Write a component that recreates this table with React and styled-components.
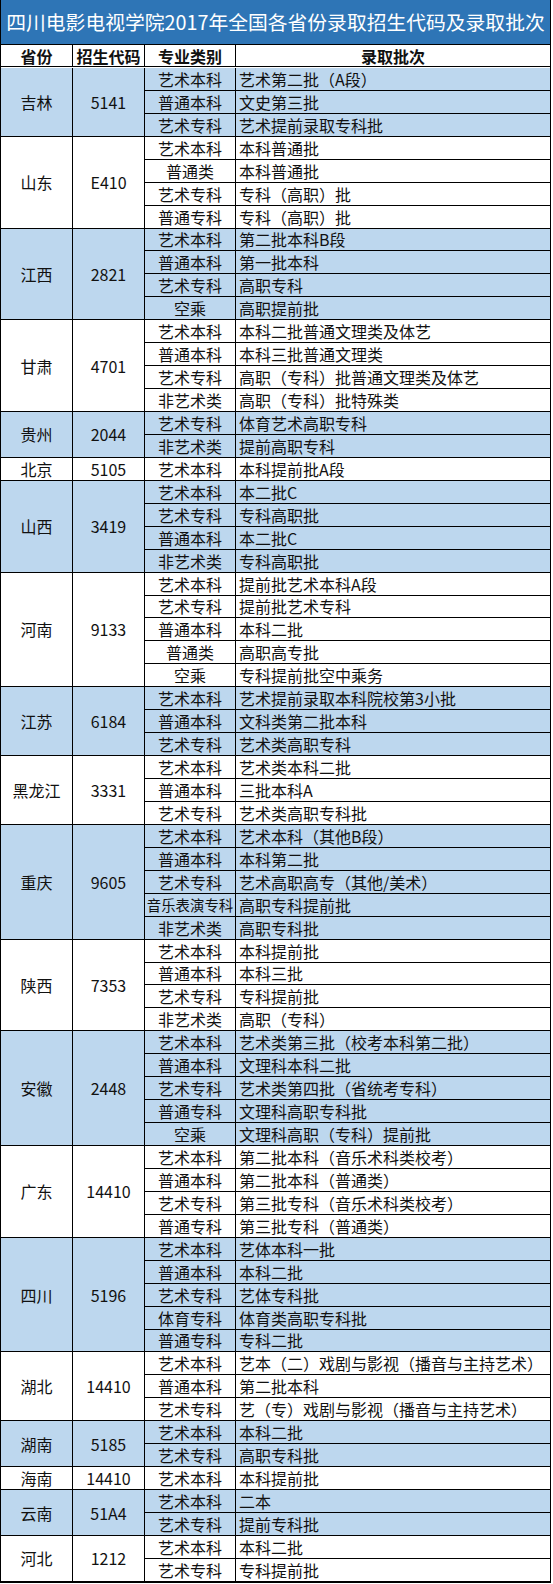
import styled, { createGlobalStyle } from "styled-components";

const GlobalStyle = createGlobalStyle`
  body {
    margin: 0;
    background: #ffffff;
    font-family: "Noto Sans CJK SC", "Noto Sans", sans-serif;
  }
`;

const Wrapper = styled.div`
  box-sizing: border-box;
  width: 551px;
  border-left: 1px solid #000;
  border-right: 1px solid #000;
  border-bottom: 1px solid #000;
  color: #111;
`;

const Title = styled.div`
  box-sizing: border-box;
  height: 45px;
  border-bottom: 1px solid #000;
  background-color: #2e75b6;
  color: #ffffff;
  font-size: 19.8px;
  line-height: 26px;
  display: flex;
  align-items: center;
  justify-content: center;
  padding-bottom: 1px;
`;

const Table = styled.div`
  display: grid;
  grid-template-columns: 72px 72px 91px 1fr;
  grid-auto-rows: 22.94px;
`;

const HeadCell = styled.div`
  box-sizing: border-box;
  height: 22px;
  display: flex;
  align-items: center;
  justify-content: center;
  font-size: 16px;
  line-height: 20px;
  font-weight: 700;
  border-bottom: 1px solid #000;
  border-right: ${(p) => (p.$last ? "none" : "1px solid #000")};
  white-space: nowrap;
`;

const Cell = styled.div`
  box-sizing: border-box;
  display: flex;
  align-items: center;
  justify-content: ${(p) => (p.$left ? "flex-start" : "center")};
  padding-left: ${(p) => (p.$left ? "3px" : "0")};
  font-size: ${(p) => (p.$tight ? "14.4px" : "16px")};
  line-height: 20px;
  white-space: nowrap;
  background-color: ${(p) => (p.$alt ? "#bdd7ee" : "#ffffff")};
  border-bottom: 1px solid #000;
  border-right: ${(p) => (p.$last ? "none" : "1px solid #000")};
  grid-row: ${(p) => (p.$span ? `span ${p.$span}` : "auto")};
`;

const data = [
  { p: "吉林", c: "5141", rows: [["艺术本科", "艺术第二批（A段）"], ["普通本科", "文史第三批"], ["艺术专科", "艺术提前录取专科批"]] },
  { p: "山东", c: "E410", rows: [["艺术本科", "本科普通批"], ["普通类", "本科普通批"], ["艺术专科", "专科（高职）批"], ["普通专科", "专科（高职）批"]] },
  { p: "江西", c: "2821", rows: [["艺术本科", "第二批本科B段"], ["普通本科", "第一批本科"], ["艺术专科", "高职专科"], ["空乘", "高职提前批"]] },
  { p: "甘肃", c: "4701", rows: [["艺术本科", "本科二批普通文理类及体艺"], ["普通本科", "本科三批普通文理类"], ["艺术专科", "高职（专科）批普通文理类及体艺"], ["非艺术类", "高职（专科）批特殊类"]] },
  { p: "贵州", c: "2044", rows: [["艺术专科", "体育艺术高职专科"], ["非艺术类", "提前高职专科"]] },
  { p: "北京", c: "5105", rows: [["艺术本科", "本科提前批A段"]] },
  { p: "山西", c: "3419", rows: [["艺术本科", "本二批C"], ["艺术专科", "专科高职批"], ["普通本科", "本二批C"], ["非艺术类", "专科高职批"]] },
  { p: "河南", c: "9133", rows: [["艺术本科", "提前批艺术本科A段"], ["艺术专科", "提前批艺术专科"], ["普通本科", "本科二批"], ["普通类", "高职高专批"], ["空乘", "专科提前批空中乘务"]] },
  { p: "江苏", c: "6184", rows: [["艺术本科", "艺术提前录取本科院校第3小批"], ["普通本科", "文科类第二批本科"], ["艺术专科", "艺术类高职专科"]] },
  { p: "黑龙江", c: "3331", rows: [["艺术本科", "艺术类本科二批"], ["普通本科", "三批本科A"], ["艺术专科", "艺术类高职专科批"]] },
  { p: "重庆", c: "9605", rows: [["艺术本科", "艺术本科（其他B段）"], ["普通本科", "本科第二批"], ["艺术专科", "艺术高职高专（其他/美术）"], ["音乐表演专科", "高职专科提前批"], ["非艺术类", "高职专科批"]] },
  { p: "陕西", c: "7353", rows: [["艺术本科", "本科提前批"], ["普通本科", "本科三批"], ["艺术专科", "专科提前批"], ["非艺术类", "高职（专科）"]] },
  { p: "安徽", c: "2448", rows: [["艺术本科", "艺术类第三批（校考本科第二批）"], ["普通本科", "文理科本科二批"], ["艺术专科", "艺术类第四批（省统考专科）"], ["普通专科", "文理科高职专科批"], ["空乘", "文理科高职（专科）提前批"]] },
  { p: "广东", c: "14410", rows: [["艺术本科", "第二批本科（音乐术科类校考）"], ["普通本科", "第二批本科（普通类）"], ["艺术专科", "第三批专科（音乐术科类校考）"], ["普通专科", "第三批专科（普通类）"]] },
  { p: "四川", c: "5196", rows: [["艺术本科", "艺体本科一批"], ["普通本科", "本科二批"], ["艺术专科", "艺体专科批"], ["体育专科", "体育类高职专科批"], ["普通专科", "专科二批"]] },
  { p: "湖北", c: "14410", rows: [["艺术本科", "艺本（二）戏剧与影视（播音与主持艺术）"], ["普通本科", "第二批本科"], ["艺术专科", "艺（专）戏剧与影视（播音与主持艺术）"]] },
  { p: "湖南", c: "5185", rows: [["艺术本科", "本科二批"], ["艺术专科", "高职专科批"]] },
  { p: "海南", c: "14410", rows: [["艺术本科", "本科提前批"]] },
  { p: "云南", c: "51A4", rows: [["艺术本科", "二本"], ["艺术专科", "提前专科批"]] },
  { p: "河北", c: "1212", rows: [["艺术本科", "本科二批"], ["艺术专科", "专科提前批"]] },
];

function Row({ cat, batch, alt }) {
  return (
    <>
      <Cell $alt={alt} $tight={cat.length > 4}>{cat}</Cell>
      <Cell $alt={alt} $left $last>{batch}</Cell>
    </>
  );
}

function ProvinceBlock({ item, alt }) {
  const n = item.rows.length;
  return (
    <>
      <Cell $alt={alt} $span={n}>{item.p}</Cell>
      <Cell $alt={alt} $span={n}>{item.c}</Cell>
      {item.rows.map(([cat, batch], ix) => (
        <Row key={ix} cat={cat} batch={batch} alt={alt} />
      ))}
    </>
  );
}

export default function App() {
  return (
    <>
      <GlobalStyle />
      <Wrapper>
        <Title>四川电影电视学院2017年全国各省份录取招生代码及录取批次</Title>
        <Table>
          <HeadCell>省份</HeadCell>
          <HeadCell>招生代码</HeadCell>
          <HeadCell>专业类别</HeadCell>
          <HeadCell $last>录取批次</HeadCell>
          {data.map((item, ix) => (
            <ProvinceBlock key={item.p} item={item} alt={ix % 2 === 0} />
          ))}
        </Table>
      </Wrapper>
    </>
  );
}
